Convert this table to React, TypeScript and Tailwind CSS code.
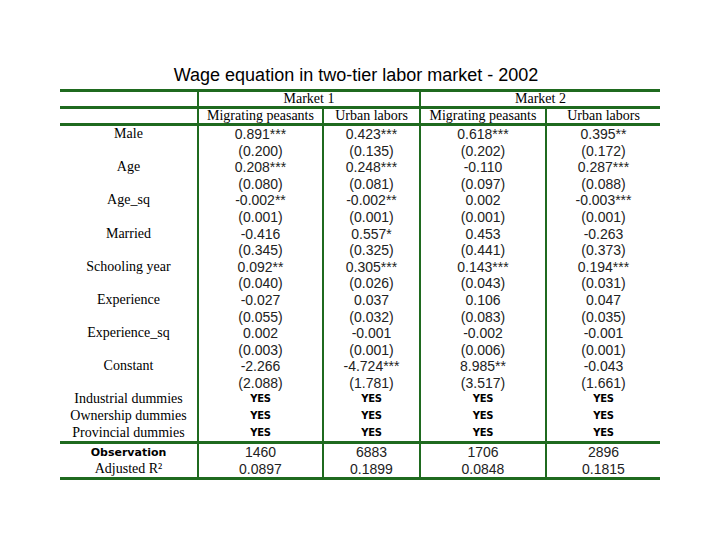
import React from "react";

const G = "bg-[#1f6a1f]";

type Row = { label: string; vals: string[]; kind: "coef" | "se" | "yes" | "stat"; boldLabel?: boolean };

const coefs: [string, string[], string[]][] = [
  ["Male", ["0.891***", "0.423***", "0.618***", "0.395**"], ["(0.200)", "(0.135)", "(0.202)", "(0.172)"]],
  ["Age", ["0.208***", "0.248***", "-0.110", "0.287***"], ["(0.080)", "(0.081)", "(0.097)", "(0.088)"]],
  ["Age_sq", ["-0.002**", "-0.002**", "0.002", "-0.003***"], ["(0.001)", "(0.001)", "(0.001)", "(0.001)"]],
  ["Married", ["-0.416", "0.557*", "0.453", "-0.263"], ["(0.345)", "(0.325)", "(0.441)", "(0.373)"]],
  ["Schooling year", ["0.092**", "0.305***", "0.143***", "0.194***"], ["(0.040)", "(0.026)", "(0.043)", "(0.031)"]],
  ["Experience", ["-0.027", "0.037", "0.106", "0.047"], ["(0.055)", "(0.032)", "(0.083)", "(0.035)"]],
  ["Experience_sq", ["0.002", "-0.001", "-0.002", "-0.001"], ["(0.003)", "(0.001)", "(0.006)", "(0.001)"]],
  ["Constant", ["-2.266", "-4.724***", "8.985**", "-0.043"], ["(2.088)", "(1.781)", "(3.517)", "(1.661)"]],
];

const bodyRows: Row[] = [];
coefs.forEach(([l, c, s]) => {
  bodyRows.push({ label: l, vals: c, kind: "coef" });
  bodyRows.push({ label: "", vals: s, kind: "se" });
});
["Industrial dummies", "Ownership dummies", "Provincial dummies"].forEach((l) =>
  bodyRows.push({ label: l, vals: ["YES", "YES", "YES", "YES"], kind: "yes" })
);

const statRows: Row[] = [
  { label: "Observation", vals: ["1460", "6883", "1706", "2896"], kind: "stat", boldLabel: true },
  { label: "Adjusted R²", vals: ["0.0897", "0.1899", "0.0848", "0.1815"], kind: "stat" },
];

const widths = ["w-[125px]", "w-[97px]", "w-[126px]", "w-[115px]"];

function HLine() {
  return <div className={`h-[3px] w-[600px] ${G}`} />;
}

function DataRow({ r }: { r: Row }) {
  const labelCls = r.boldLabel
    ? "font-['DejaVu_Sans',sans-serif] font-bold text-[11px] text-black"
    : "font-['Liberation_Serif',serif] text-[14px] text-black";
  return (
    <div className="flex h-[16.6px] items-center">
      <div className={`w-[137px] h-full flex items-center justify-center leading-none ${labelCls}`}>{r.label}</div>
      {r.vals.map((v, i) => (
        <div
          key={i}
          className={`${widths[i]} h-full border-l-2 border-[#1f6a1f] flex items-center justify-center leading-none ${
            r.kind === "yes"
              ? "font-['DejaVu_Sans',sans-serif] font-bold text-[10px] text-black tracking-[-0.3px]"
              : "font-['Liberation_Sans',sans-serif] text-[14px] text-[#222]"
          }`}
        >
          {v}
        </div>
      ))}
    </div>
  );
}

export default function App() {
  return (
    <div className="w-[720px] h-[540px] bg-white flex flex-col items-center">
      <div className="mt-[65px] h-[20px] leading-[20px] w-[720px] text-center font-['Liberation_Sans',sans-serif] text-[18px] text-black">
        <span className="relative left-[-4px]">Wage equation in two-tier labor market - 2002</span>
      </div>
      <div className="mt-[4px] w-[600px] flex flex-col">
        <HLine />
        <div className="flex h-[13.7px] font-['Liberation_Serif',serif] text-[14px] text-black leading-none">
          <div className="w-[137px]" />
          <div className="w-[222px] border-l-2 border-[#1f6a1f] flex items-center justify-center">Market 1</div>
          <div className="w-[241px] border-l-2 border-[#1f6a1f] flex items-center justify-center">Market 2</div>
        </div>
        <HLine />
        <div className="flex h-[14px] font-['Liberation_Serif',serif] text-[14px] text-black leading-none">
          <div className="w-[137px]" />
          {["Migrating peasants", "Urban labors", "Migrating peasants", "Urban labors"].map((t, i) => (
            <div key={i} className={`${widths[i]} border-l-2 border-[#1f6a1f] flex items-center justify-center`}>
              {t}
            </div>
          ))}
        </div>
        <HLine />
        {bodyRows.map((r, i) => (
          <DataRow key={i} r={r} />
        ))}
        <HLine />
        {statRows.map((r, i) => (
          <DataRow key={i} r={r} />
        ))}
        <HLine />
      </div>
    </div>
  );
}
